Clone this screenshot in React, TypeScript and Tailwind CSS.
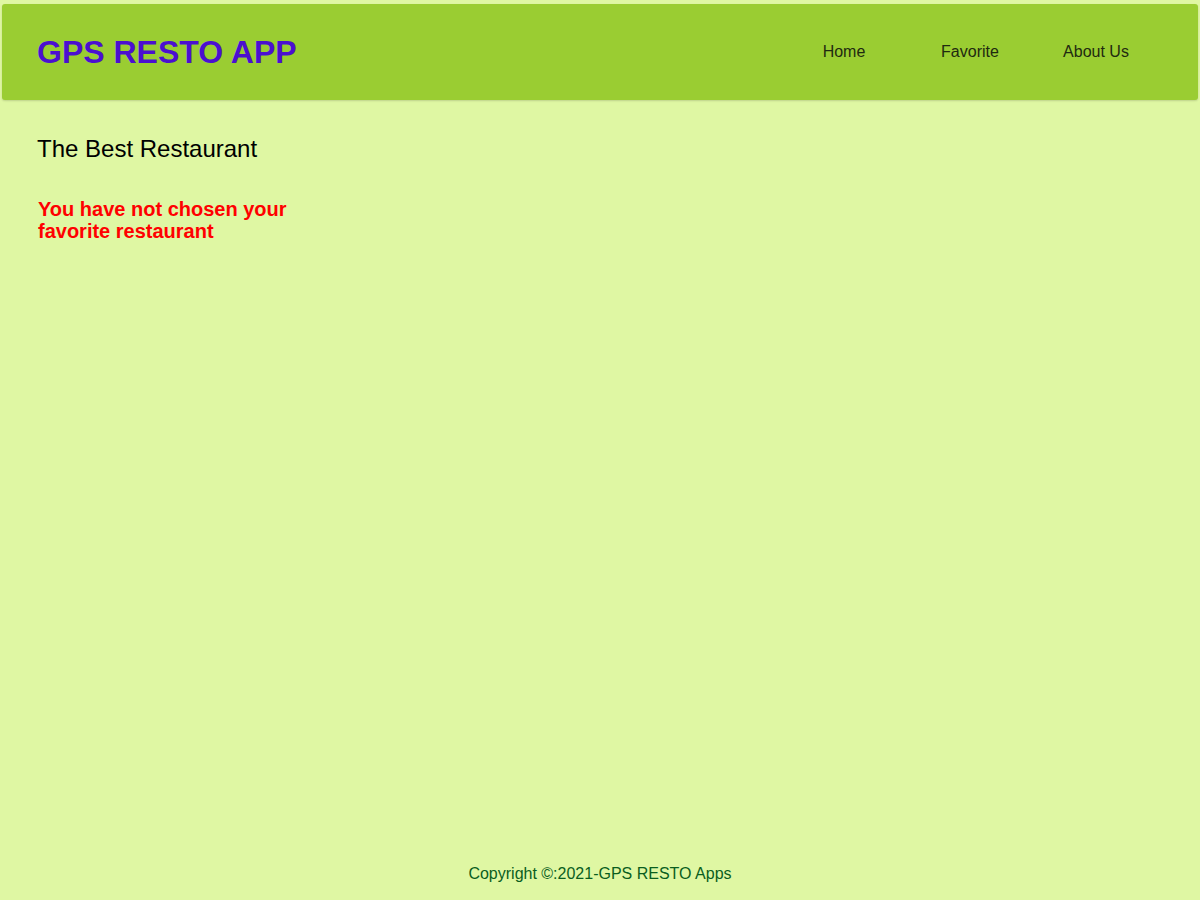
import React from 'react';

const App = () => {
  return (
    <div
      className="min-h-screen flex flex-col bg-[#dff7a3]"
      style={{ fontFamily: '"Liberation Sans", Arial, sans-serif' }}
    >
      {/* Header */}
      <header className="mx-[2px] mt-[4px] h-[96px] flex items-center justify-between bg-[#9acd32] rounded-[3px] shadow-[0_1px_2px_rgba(0,0,0,0.15)] pl-[35px] pr-[39px]">
        <h1 className="text-[32px] font-bold text-[#4b0fd0] leading-none">GPS RESTO APP</h1>
        <nav className="flex items-center text-[16px] text-[#1f2a10]">
          <a href="#" className="w-[126px] text-center">Home</a>
          <a href="#" className="w-[126px] text-center">Favorite</a>
          <a href="#" className="w-[126px] text-center">About Us</a>
        </nav>
      </header>

      {/* Content */}
      <main className="flex-1 pl-[37px] pt-[34px]">
        <h2 className="text-[24px] text-black leading-[30px]">The Best Restaurant</h2>
        <p className="mt-[34px] ml-[1px] w-[280px] text-[20px] font-bold text-[#ff0000] leading-[22px]">
          You have not chosen your favorite restaurant
        </p>
      </main>

      {/* Footer */}
      <footer className="h-[54px] flex items-start justify-center pt-[16px] text-[16px] text-[#0a5e1e]">
        Copyright ©:2021-GPS RESTO Apps
      </footer>
    </div>
  );
};

export default App;
